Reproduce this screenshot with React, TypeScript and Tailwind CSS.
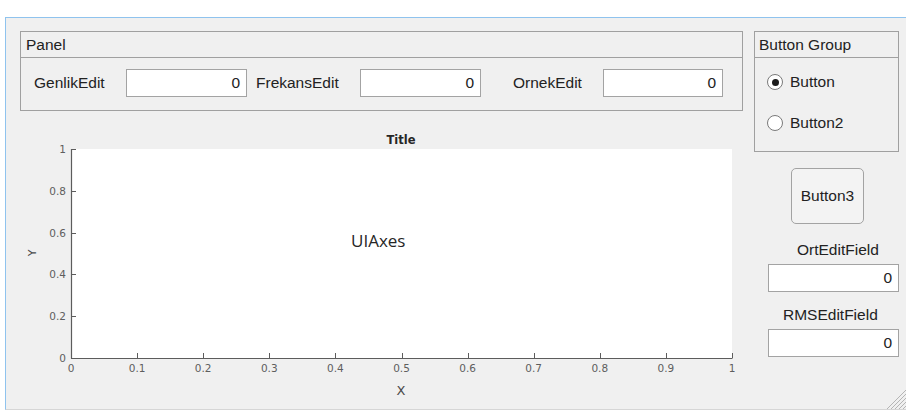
import React from "react";

const xTicks = [0, 0.1, 0.2, 0.3, 0.4, 0.5, 0.6, 0.7, 0.8, 0.9, 1];
const yTicks = [0, 0.2, 0.4, 0.6, 0.8, 1];

function EditBox({ w, value = "0" }: { w: string; value?: string }) {
  return (
    <div
      className={`${w} h-[28px] bg-white border border-[#a3a3a3] flex items-center justify-end pr-[6px] text-[15.5px] text-[#222]`}
    >
      {value}
    </div>
  );
}

function Radio({ checked, label }: { checked?: boolean; label: string }) {
  return (
    <div className="flex items-center h-[20px]">
      <div className="w-[16px] h-[16px] rounded-full border border-[#7a7a7a] bg-white flex items-center justify-center">
        {checked && <div className="w-[7px] h-[7px] rounded-full bg-[#1b1b1b]" />}
      </div>
      <span className="ml-[7px] text-[15.5px] text-[#222]">{label}</span>
    </div>
  );
}

function Axes() {
  // plot box in local coords
  const x0 = 51;
  const x1 = 712;
  const yT = 38;
  const yB = 247;
  const xs = (v: number) => x0 + (x1 - x0) * v;
  const ys = (v: number) => yB - (yB - yT) * v;
  return (
    <svg width="723" height="292" className="block">
      <rect x={x0} y={yT} width={x1 - x0} height={yB - yT} fill="#ffffff" />
      <text
        x="381"
        y="33"
        textAnchor="middle"
        fontFamily="DejaVu Sans, sans-serif"
        fontWeight="bold"
        fontSize="11.5"
        fill="#262626"
      >
        Title
      </text>
      {/* axis lines */}
      <line x1={x0 + 0.5} y1={yT} x2={x0 + 0.5} y2={yB + 0.5} stroke="#5c5c5c" strokeWidth="1.2" />
      <line x1={x0} y1={yB + 0.5} x2={x1 + 0.5} y2={yB + 0.5} stroke="#5c5c5c" strokeWidth="1.2" />
      {yTicks.map((t) => (
        <g key={`y${t}`}>
          <line x1={x0} y1={Math.round(ys(t)) + 0.5} x2={x0 + 5} y2={Math.round(ys(t)) + 0.5} stroke="#5c5c5c" />
          <text
            x={x0 - 5}
            y={ys(t) + 4}
            textAnchor="end"
            fontFamily="DejaVu Sans, sans-serif"
            fontSize="10.5"
            fill="#5e5e5e"
          >
            {t}
          </text>
        </g>
      ))}
      {xTicks.map((t) => (
        <g key={`x${t}`}>
          <line x1={Math.round(xs(t)) + 0.5} y1={yB} x2={Math.round(xs(t)) + 0.5} y2={yB - 5} stroke="#5c5c5c" />
          <text
            x={xs(t)}
            y={yB + 14}
            textAnchor="middle"
            fontFamily="DejaVu Sans, sans-serif"
            fontSize="10.5"
            fill="#5e5e5e"
          >
            {t}
          </text>
        </g>
      ))}
      <text
        x="381"
        y="284"
        textAnchor="middle"
        fontFamily="DejaVu Sans, sans-serif"
        fontSize="13"
        fill="#4a4a4a"
      >
        X
      </text>
      <text
        x="0"
        y="0"
        transform="translate(16 142) rotate(-90)"
        textAnchor="middle"
        fontFamily="DejaVu Sans, sans-serif"
        fontSize="11"
        fill="#4a4a4a"
      >
        Y
      </text>
      <text
        x="331"
        y="136"
        fontFamily="Open Sans, Noto Sans, sans-serif"
        fontSize="17"
        fill="#262626"
      >
        UIAxes
      </text>
    </svg>
  );
}

export default function App() {
  return (
    <div className="w-[906px] h-[416px] bg-white pt-[17px] pl-[5px] overflow-hidden font-['Liberation_Sans',Arial,sans-serif]">
      <div className="relative h-[393px] bg-[#f0f0f0] border-t-[1.5px] border-l-[1.5px] border-b border-t-[#8fc3ee] border-l-[#8fc3ee] border-b-[#d6d6d6]">
        <div className="flex pt-[13px] pl-[14px]">
          {/* left column */}
          <div className="w-[723px] flex flex-col">
            <div className="h-[80px] border border-[#a0a0a0] flex flex-col">
              <div className="h-[26px] border-b border-[#a0a0a0] flex items-center pl-[5px] text-[15.5px] text-[#222]">
                Panel
              </div>
              <div className="flex items-center pt-[11px] pl-[13px] text-[15.5px] text-[#222]">
                <span className="w-[92px]">GenlikEdit</span>
                <EditBox w="w-[121px]" />
                <span className="w-[104px] ml-[9px]">FrekansEdit</span>
                <EditBox w="w-[121px]" />
                <span className="w-[90px] ml-[32px]">OrnekEdit</span>
                <EditBox w="w-[120px]" />
              </div>
            </div>
            <Axes />
          </div>
          {/* right column */}
          <div className="w-[145px] ml-[11px] flex flex-col">
            <div className="h-[121px] border border-[#a0a0a0] flex flex-col">
              <div className="h-[26px] border-b border-[#a0a0a0] flex items-center pl-[4px] text-[15.5px] text-[#222]">
                Button Group
              </div>
              <div className="flex flex-col pl-[12px] pt-[14px] gap-[21px]">
                <Radio checked label="Button" />
                <Radio label="Button2" />
              </div>
            </div>
            <div className="mt-[16px] ml-[37px] w-[73px] h-[56px] rounded-[5px] border border-[#a3a3a3] bg-[#f3f3f3] flex items-center justify-center text-[15.5px] text-[#222]">
              Button3
            </div>
            <div className="mt-[17px] h-[18px] pl-[43px] text-[15.5px] leading-[18px] text-[#222]">
              OrtEditField
            </div>
            <div className="mt-[5px] ml-[14px]">
              <EditBox w="w-[131px]" />
            </div>
            <div className="mt-[14px] h-[18px] pl-[29px] text-[15.5px] leading-[18px] text-[#222]">
              RMSEditField
            </div>
            <div className="mt-[5px] ml-[14px]">
              <EditBox w="w-[131px]" />
            </div>
          </div>
        </div>
        {/* resize grip */}
        <svg className="absolute right-0 bottom-0" width="20" height="20">
          {[0, 4, 8, 12, 16].map((o) => (
            <line key={o} x1={20 - o - 3} y1="20" x2="20" y2={20 - o - 3} stroke="#b5b5b5" strokeWidth="1" />
          ))}
        </svg>
      </div>
    </div>
  );
}
